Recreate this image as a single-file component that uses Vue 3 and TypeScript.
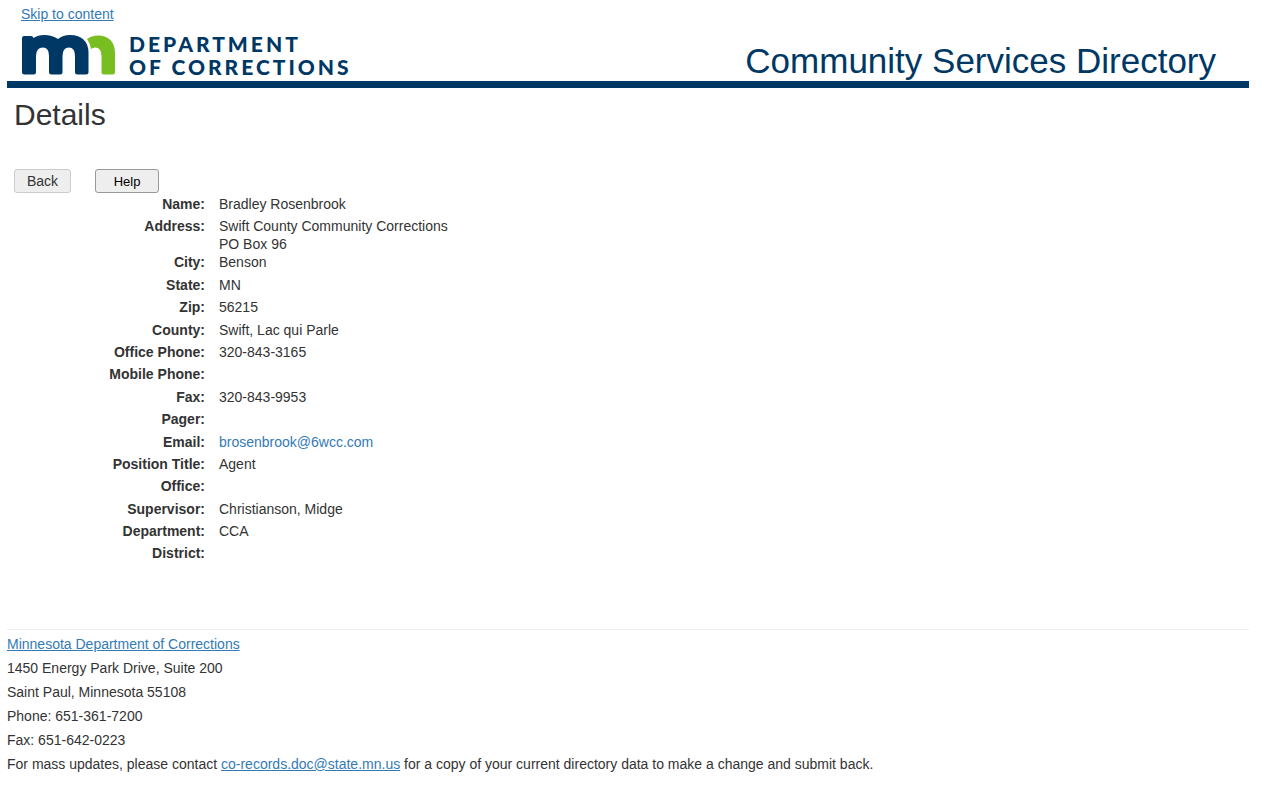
<script setup lang="ts">
interface Detail {
  label: string
  lines: string[]
  email?: boolean
}

const details: Detail[] = [
  { label: 'Name', lines: ['Bradley Rosenbrook'] },
  { label: 'Address', lines: ['Swift County Community Corrections', 'PO Box 96'] },
  { label: 'City', lines: ['Benson'] },
  { label: 'State', lines: ['MN'] },
  { label: 'Zip', lines: ['56215'] },
  { label: 'County', lines: ['Swift, Lac qui Parle'] },
  { label: 'Office Phone', lines: ['320-843-3165'] },
  { label: 'Mobile Phone', lines: [] },
  { label: 'Fax', lines: ['320-843-9953'] },
  { label: 'Pager', lines: [] },
  { label: 'Email', lines: ['brosenbrook@6wcc.com'], email: true },
  { label: 'Position Title', lines: ['Agent'] },
  { label: 'Office', lines: [] },
  { label: 'Supervisor', lines: ['Christianson, Midge'] },
  { label: 'Department', lines: ['CCA'] },
  { label: 'District', lines: [] },
]
</script>

<template>
  <div class="page">
    <a class="skip" href="#content">Skip to content</a>
    <header class="masthead">
      <div class="brand">
        <svg class="mark" width="94" height="40" viewBox="0 0 94 40" aria-hidden="true">
          <path
            fill="#003865"
            d="M2 1H9Q11 1 11.5 3Q16 0 22 0Q30 0 36 4Q41 0 48 0C60 0 66.500 7 66.500 17V37Q66.500 39.500 64 39.500H55.500Q53 39.500 53 37V21Q53 12.500 47 12.500Q40.500 12.500 40.500 21V37Q40.500 39.500 38 39.500H29.500Q27 39.500 27 37V21Q27 12.500 21 12.500Q14 12.500 14 21V37Q14 39.500 11.500 39.500H2.500Q0 39.500 0 37V3Q0 1 2 1Z"
          />
          <path
            fill="#78be21"
            d="M65 4Q69.500 0.500 76 0.500C87 0.500 93 7 93 18V37Q93 39.500 90.500 39.500H82Q79.500 39.500 79.500 37V21Q79.500 12.500 73 12.500Q71 12.500 69 14Q68 8 65 4Z"
          />
        </svg>
        <div class="wordmark">DEPARTMENT<br />OF CORRECTIONS</div>
      </div>
      <div class="site-title">Community Services Directory</div>
    </header>

    <main id="content">
      <h1>Details</h1>
      <div class="actions">
        <button type="button" class="back">Back</button>
        <button type="button" class="help">Help</button>
      </div>
      <dl>
        <div v-for="item in details" :key="item.label" class="row">
          <dt>{{ item.label }}:</dt>
          <dd :class="{ multi: item.lines.length > 1 }">
            <a v-if="item.email" :href="`mailto:${item.lines[0]}`">{{ item.lines[0] }}</a>
            <template v-else>
              <div v-for="line in item.lines" :key="line">{{ line }}</div>
            </template>
          </dd>
        </div>
      </dl>
    </main>

    <footer>
      <p><a href="https://mn.gov/doc/">Minnesota Department of Corrections</a></p>
      <p>1450 Energy Park Drive, Suite 200</p>
      <p>Saint Paul, Minnesota 55108</p>
      <p>Phone: 651-361-7200</p>
      <p>Fax: 651-642-0223</p>
      <p>
        For mass updates, please contact
        <a href="mailto:co-records.doc@state.mn.us">co-records.doc@state.mn.us</a>
        for a copy of your current directory data to make a change and submit back.
      </p>
    </footer>
  </div>
</template>

<style>
body {
  margin: 0;
  background: #fff;
}
</style>

<style scoped>
.page {
  margin: 0 31px 0 7px;
  padding-top: 4px;
  font-family: 'Liberation Sans', Arial, sans-serif;
  font-size: 14px;
  line-height: 20px;
  color: #333;
}
a {
  color: #337ab7;
}
.skip {
  display: table;
  margin-left: 14px;
}
.masthead {
  display: flex;
  justify-content: space-between;
  align-items: flex-end;
  height: 57px;
  padding: 0 33px 0 15px;
  border-bottom: 7px solid #003865;
  color: #003865;
}
.brand {
  display: flex;
  align-items: flex-end;
  gap: 13px;
  padding-bottom: 6px;
}
.mark {
  display: block;
}
.wordmark {
  font: 900 21px/23px Lato, sans-serif;
  letter-spacing: 3px;
  margin-bottom: -3px;
}
.site-title {
  font-size: 35px;
  line-height: 40px;
}
h1 {
  margin: 10px 0 0 7px;
  font-size: 30px;
  line-height: 33px;
  font-weight: 400;
}
.actions {
  display: flex;
  gap: 24px;
  margin: 38px 0 0 7px;
}
button {
  box-sizing: border-box;
  height: 24px;
  padding: 0;
  border: 1px solid #ccc;
  border-radius: 3px;
  background: #eee;
  color: #333;
  font-family: inherit;
  font-size: 14px;
}
.back {
  width: 57px;
}
.help {
  width: 64px;
  border-color: #999;
  color: #000;
  font-size: 13px;
}
dl {
  margin: 0;
}
.row {
  display: grid;
  grid-template-columns: 198px 1fr;
  column-gap: 14px;
  line-height: 1.6;
}
dt {
  text-align: right;
  font-weight: 700;
}
dd {
  margin: 0;
}
dd a {
  text-decoration: none;
}
.multi {
  padding-top: 2px;
  margin-bottom: -2px;
  line-height: 18px;
}
footer {
  margin-top: 64px;
  padding-top: 2px;
  border-top: 1px solid #eee;
}
footer p {
  margin: 0;
  line-height: 24px;
}
</style>
